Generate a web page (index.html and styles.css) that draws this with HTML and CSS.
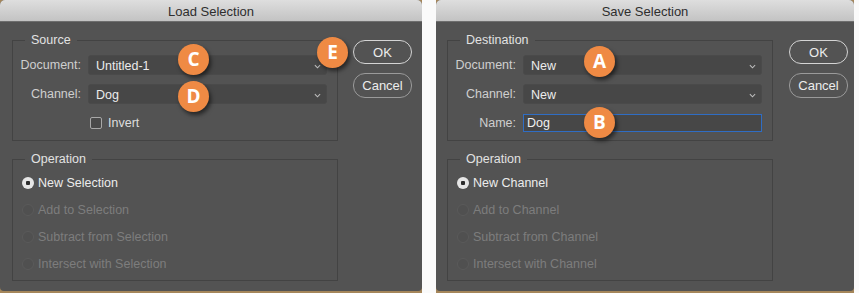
FILE: index.html
```html
<!DOCTYPE html>
<html lang="en">
<head>
  <meta charset="UTF-8" />
  <title>Load / Save Selection</title>
  <link rel="stylesheet" href="styles.css">
</head>
<body>

<div class="screen">

  <div class="backdrop backdrop-left">
    <div class="dialog">
      <div class="titlebar">Load Selection</div>
      <div class="dialog-body">
        <div class="groups">
          <fieldset class="group">
            <legend>Source</legend>
            <div class="form-grid">
              <label>Document:</label>
              <div class="select">Untitled-1<svg class="chevron" viewBox="0 0 8 5"><path d="M1 1l3 3 3-3"/></svg></div>
              <label>Channel:</label>
              <div class="select">Dog<svg class="chevron" viewBox="0 0 8 5"><path d="M1 1l3 3 3-3"/></svg></div>
              <span></span>
              <div class="check"><span class="box"></span>Invert</div>
            </div>
          </fieldset>
          <fieldset class="group">
            <legend>Operation</legend>
            <div class="radio on"><span class="dot"></span>New Selection</div>
            <div class="radio off"><span class="dot"></span>Add to Selection</div>
            <div class="radio off"><span class="dot"></span>Subtract from Selection</div>
            <div class="radio off"><span class="dot"></span>Intersect with Selection</div>
          </fieldset>
        </div>
        <div class="actions">
          <button class="btn default">OK</button>
          <button class="btn">Cancel</button>
        </div>
      </div>
      <span class="badge badge-c">C</span>
      <span class="badge badge-d">D</span>
      <span class="badge badge-e">E</span>
    </div>
  </div>

  <div class="backdrop backdrop-right">
    <div class="dialog">
      <div class="titlebar">Save Selection</div>
      <div class="dialog-body">
        <div class="groups">
          <fieldset class="group">
            <legend>Destination</legend>
            <div class="form-grid">
              <label>Document:</label>
              <div class="select">New<svg class="chevron" viewBox="0 0 8 5"><path d="M1 1l3 3 3-3"/></svg></div>
              <label>Channel:</label>
              <div class="select">New<svg class="chevron" viewBox="0 0 8 5"><path d="M1 1l3 3 3-3"/></svg></div>
              <label>Name:</label>
              <div class="field">Dog</div>
            </div>
          </fieldset>
          <fieldset class="group">
            <legend>Operation</legend>
            <div class="radio on"><span class="dot"></span>New Channel</div>
            <div class="radio off"><span class="dot"></span>Add to Channel</div>
            <div class="radio off"><span class="dot"></span>Subtract from Channel</div>
            <div class="radio off"><span class="dot"></span>Intersect with Channel</div>
          </fieldset>
        </div>
        <div class="actions">
          <button class="btn default">OK</button>
          <button class="btn">Cancel</button>
        </div>
      </div>
      <span class="badge badge-a">A</span>
      <span class="badge badge-b">B</span>
    </div>
  </div>

</div>

</body>
</html>
```

FILE: styles.css
```css
body {
  margin: 0;
  background: #fafafa;
  font-family: "Liberation Sans", Arial, sans-serif;
  font-size: 12.5px;
  color: #dcdcdc;
}

.screen {
  display: flex;
  gap: 14px;
  width: 859px;
  height: 293px;
}

.backdrop {
  height: 293px;
  background: #a5865a;
}

.backdrop-left {
  width: 422px;
}

.backdrop-right {
  width: 418px;
}

.dialog {
  position: relative;
  height: 291px;
  background: #535353;
  border-radius: 5px 5px 4px 4px;
  overflow: hidden;
}

.titlebar {
  height: 22px;
  line-height: 23px;
  text-align: center;
  font-size: 13px;
  color: #2e2e2e;
  background: linear-gradient(#dedede, #c3c3c3);
  border-bottom: 1px solid #6e6e6e;
  box-sizing: border-box;
}

.dialog-body {
  display: flex;
  justify-content: space-between;
  padding: 10px 10px 0 12px;
}

.backdrop-right .dialog-body {
  padding: 10px 6px 0 11px;
}

.groups {
  display: flex;
  flex-direction: column;
  gap: 10px;
  width: 326px;
}

.group {
  margin: 0;
  border: 1px solid #434343;
  padding: 7px 10px 7px 0;
}

.group legend {
  margin-left: 12px;
  padding: 0 6px;
  line-height: 16px;
  color: #e2e2e2;
}

.form-grid {
  display: grid;
  grid-template-columns: 68px 1fr;
  column-gap: 7px;
  row-gap: 9px;
  align-items: center;
}

.form-grid label {
  text-align: right;
  color: #cfcfcf;
}

.select {
  position: relative;
  height: 20px;
  line-height: 20px;
  padding-left: 7px;
  background: #474747;
  border: 1px solid #4a4a4a;
  border-radius: 3px;
  box-sizing: border-box;
  color: #ececec;
}

.chevron {
  position: absolute;
  right: 5px;
  top: 8px;
  width: 7px;
  height: 5px;
  fill: none;
  stroke: #bdbdbd;
  stroke-width: 1.2;
}

.field {
  height: 18px;
  line-height: 16px;
  padding-left: 3px;
  background: #474747;
  border: 1px solid #2f6dc4;
  box-sizing: border-box;
  color: #f0f0f0;
  margin: 1px 0;
}

.check {
  display: flex;
  align-items: center;
  gap: 6px;
  height: 20px;
  padding-left: 2px;
  color: #dedede;
}

.check .box {
  width: 10px;
  height: 10px;
  border: 1px solid #a8a8a8;
  border-radius: 2px;
  background: #4a4a4a;
}

.radio {
  display: flex;
  align-items: center;
  gap: 4px;
  height: 18px;
  margin: 9px 0 0 9px;
}

.radio:first-of-type {
  margin-top: 0;
}

.radio .dot {
  width: 12px;
  height: 12px;
  border-radius: 50%;
  box-sizing: border-box;
}

.radio.on {
  color: #ececec;
}

.radio.on .dot {
  background: radial-gradient(circle, #2c2c2c 0 2px, #e6e6e6 2.5px);
}

.radio.off {
  color: #7d7d7d;
}

.radio.off .dot {
  background: #505050;
  border: 1px solid #5a5a5a;
}

.actions {
  display: flex;
  flex-direction: column;
  gap: 9px;
  width: 59px;
  padding-top: 8px;
}

.btn {
  height: 25px;
  padding: 0;
  font-family: inherit;
  font-size: 13px;
  color: #ececec;
  background: #535353;
  border: 1px solid #9a9a9a;
  border-radius: 12px;
}

.btn.default {
  height: 24px;
  border-color: #d4d4d4;
}

.badge {
  position: absolute;
  width: 31px;
  height: 31px;
  line-height: 31px;
  text-align: center;
  border-radius: 50%;
  background: #ef8a44;
  color: #ffffff;
  font-family: "Open Sans", "Noto Sans", sans-serif;
  font-weight: 700;
  font-size: 19px;
  box-shadow: 2px 3px 4px rgba(0, 0, 0, 0.55);
}

.badge-c { left: 178px; top: 44px; }
.badge-d { left: 178px; top: 81px; }
.badge-e { left: 317px; top: 37px; }
.badge-a { left: 148px; top: 46px; }
.badge-b { left: 148px; top: 107px; }
```
